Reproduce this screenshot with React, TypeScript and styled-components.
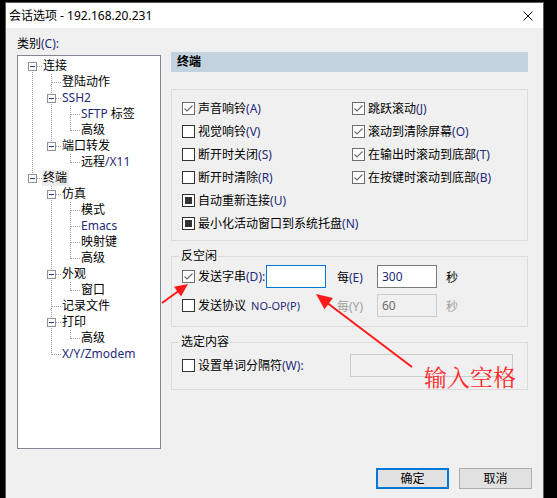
import React from 'react';
import styled, { createGlobalStyle } from 'styled-components';

const GlobalStyle = createGlobalStyle`
  html, body {
    margin: 0;
    padding: 0;
    background: #000;
  }
  body {
    font-family: "Noto Sans", "Noto Sans CJK SC", sans-serif;
    font-size: 12px;
    color: #000;
  }
`;

type TreeNode = {
  label: React.ReactNode;
  children?: TreeNode[];
  selected?: boolean;
};

type BoxState = 'checked' | 'unchecked' | 'mixed';

const Frame = styled.div`
  position: relative;
  width: 557px;
  height: 498px;
  box-sizing: border-box;
  padding: 2px 13px 0 5px;
  background: #000;
  overflow: hidden;
`;

const Window = styled.div`
  height: 100%;
  box-sizing: border-box;
  display: flex;
  flex-direction: column;
  border: 1px solid #5c5c5c;
  border-bottom: 0;
  background: #f0f0f0;
`;

const TitleBar = styled.div`
  height: 25px;
  display: flex;
  align-items: center;
  background: #fff;
  padding-left: 3px;
`;

const Title = styled.div`
  flex: 1;
  line-height: 16px;
  white-space: nowrap;
`;

const CloseBtn = styled.div`
  width: 30px;
  height: 25px;
  display: flex;
  align-items: center;
  justify-content: center;
`;

const Main = styled.div`
  display: grid;
  grid-template-columns: 144px 357px;
  column-gap: 10px;
  padding: 8px 15px 0 11px;
  align-items: start;
`;

const CategoryLabel = styled.div`
  line-height: 16px;
  margin-bottom: 3px;
`;

const TreeBox = styled.div`
  height: 394px;
  box-sizing: border-box;
  background: #fff;
  border: 1px solid #828790;
  padding-top: 2px;
`;

const TreeRow = styled.div`
  display: flex;
  height: 16px;
  padding-left: 5px;
`;

const TreeText = styled.span<{ $selected?: boolean }>`
  line-height: 16px;
  padding: 0 2px 0 1px;
  white-space: nowrap;
  background: ${p => (p.$selected ? '#ececec' : 'transparent')};
`;

const Lat = styled.span<{ $dim?: boolean }>`
  color: ${p => (p.$dim ? 'inherit' : '#1f2a7a')};
`;

const RightCol = styled.div`
  padding-top: 16px;
  display: flex;
  flex-direction: column;
`;

const SectionHeader = styled.div`
  height: 20px;
  line-height: 20px;
  background: #c3d2df;
  font-weight: bold;
  padding-left: 6px;
`;

const OptionGrid = styled.div`
  margin-top: 17px;
  border: 1px solid #dcdcdc;
  padding: 7px 10px 5px;
  display: grid;
  grid-template-rows: repeat(6, 23px);
  grid-template-columns: 170px 1fr;
  grid-auto-flow: column;
  align-items: center;
`;

const Group = styled.fieldset`
  margin: 7px 0 0;
  border: 1px solid #dcdcdc;
  padding: 1px 10px 9px;
  min-width: 0;
`;

const SelectGroup = styled(Group)`
  padding: 4px 10px 12px;
`;

const Legend = styled.legend`
  padding: 0 1px;
  margin-left: -2px;
  line-height: 16px;
`;

const IdleGrid = styled.div`
  display: grid;
  grid-template-columns: 84px 60px 51px 60px 1fr;
  grid-template-rows: 23px 23px;
  row-gap: 6px;
  align-items: center;
`;

const SelGrid = styled.div`
  display: grid;
  grid-template-columns: 168px 163px;
  height: 23px;
  align-items: center;
`;

const Check = styled.label<{ $span?: number }>`
  display: flex;
  align-items: center;
  gap: 3px;
  white-space: nowrap;
  line-height: 16px;
  grid-column: span ${p => p.$span ?? 1};
`;

const Box = styled.span<{ $state: BoxState }>`
  width: 13px;
  height: 13px;
  box-sizing: border-box;
  flex-shrink: 0;
  display: flex;
  align-items: center;
  justify-content: center;
  background: #fff;
  border: 1px solid ${p => (p.$state === 'checked' ? '#6d6d6d' : '#333')};
`;

const MixedMark = styled.span`
  width: 7px;
  height: 7px;
  background: #333;
`;

const Small = styled.span`
  font-size: 11px;
  margin-left: 5px;
`;

const Field = styled.div<{ $tone: 'focus' | 'normal' | 'disabled'; $width: number }>`
  width: ${p => p.$width}px;
  height: 23px;
  box-sizing: border-box;
  padding-left: 4px;
  line-height: 21px;
  border: 1px solid
    ${p => (p.$tone === 'focus' ? '#0078d7' : p.$tone === 'normal' ? '#7a7a7a' : '#cccccc')};
  background: ${p => (p.$tone === 'disabled' ? '#f0f0f0' : '#fff')};
  color: ${p => (p.$tone === 'disabled' ? '#6d6d6d' : '#000')};
`;

const Caption = styled.span<{ $disabled?: boolean; $pad?: number }>`
  padding-left: ${p => p.$pad ?? 0}px;
  white-space: nowrap;
  color: ${p => (p.$disabled ? '#a0a0a0' : '#000')};
`;

const Footer = styled.div`
  display: flex;
  justify-content: flex-end;
  gap: 10px;
  padding: 19px 11px 0 0;
`;

const Button = styled.div<{ $primary?: boolean }>`
  width: 73px;
  height: 21px;
  box-sizing: border-box;
  display: flex;
  align-items: center;
  justify-content: center;
  line-height: 16px;
  background: #e1e1e1;
  border: ${p => (p.$primary ? '2px solid #0078d7' : '1px solid #adadad')};
`;

const Overlay = styled.svg`
  position: absolute;
  left: 0;
  top: 0;
  pointer-events: none;
`;

const Note = styled.div`
  position: absolute;
  left: 424px;
  top: 365px;
  font-family: "Noto Serif CJK SC", "Noto Sans CJK SC", serif;
  font-size: 23px;
  line-height: 23px;
  color: #ff2a2a;
  white-space: nowrap;
`;

const tree: TreeNode[] = [
  {
    label: '连接',
    children: [
      { label: '登陆动作' },
      {
        label: <Lat>SSH2</Lat>,
        children: [{ label: <><Lat>SFTP</Lat> 标签</> }, { label: '高级' }],
      },
      { label: '端口转发', children: [{ label: <>远程<Lat>/X11</Lat></> }] },
    ],
  },
  {
    label: '终端',
    selected: true,
    children: [
      {
        label: '仿真',
        children: [
          { label: '模式' },
          { label: <Lat>Emacs</Lat> },
          { label: '映射键' },
          { label: '高级' },
        ],
      },
      { label: '外观', children: [{ label: '窗口' }] },
      { label: '记录文件' },
      { label: '打印', children: [{ label: '高级' }] },
      { label: <Lat>X/Y/Zmodem</Lat> },
    ],
  },
];

const dots = { stroke: '#a0a0a0', strokeDasharray: '1 1' };

const Guide = ({ on }: { on: boolean }) => (
  <svg width="19" height="16" viewBox="0 0 19 16">
    {on && <line x1="9.5" y1="0" x2="9.5" y2="16" {...dots} />}
  </svg>
);

const Connector = ({ first, last, open }: { first: boolean; last: boolean; open: boolean }) => (
  <svg width="19" height="16" viewBox="0 0 19 16">
    <line x1="9.5" y1={first ? 8 : 0} x2="9.5" y2={last ? 9 : 16} {...dots} />
    <line x1="10" y1="8.5" x2="19" y2="8.5" {...dots} />
    {open && (
      <>
        <rect x="5.5" y="4.5" width="8" height="8" fill="#fff" stroke="#919191" />
        <line x1="7" y1="8.5" x2="12" y2="8.5" stroke="#1f3f8f" />
      </>
    )}
  </svg>
);

function renderTree(nodes: TreeNode[], guides: boolean[], out: React.ReactNode[]) {
  nodes.forEach((node, i) => {
    const last = i === nodes.length - 1;
    out.push(
      <TreeRow key={out.length}>
        {guides.map((g, k) => (
          <Guide key={k} on={g} />
        ))}
        <Connector first={guides.length === 0 && i === 0} last={last} open={!!node.children} />
        <TreeText $selected={node.selected}>{node.label}</TreeText>
      </TreeRow>
    );
    if (node.children) renderTree(node.children, [...guides, !last], out);
  });
  return out;
}

const CheckBox = ({ state }: { state: BoxState }) => (
  <Box $state={state}>
    {state === 'checked' && (
      <svg width="11" height="11" viewBox="0 0 11 11">
        <polyline points="1.5,5.5 4,8 9.5,2.5" fill="none" stroke="#6a6a6a" strokeWidth="1.1" />
      </svg>
    )}
    {state === 'mixed' && <MixedMark />}
  </Box>
);

const Option = ({ state, text, keyHint }: { state: BoxState; text: string; keyHint: string }) => (
  <Check>
    <CheckBox state={state} />
    <span>
      {text}
      <Lat>({keyHint})</Lat>
    </span>
  </Check>
);

export default function App() {
  return (
    <>
      <GlobalStyle />
      <Frame>
        <Window>
          <TitleBar>
            <Title>会话选项 - 192.168.20.231</Title>
            <CloseBtn>
              <svg width="10" height="10" viewBox="0 0 10 10">
                <path d="M0.5 0.5 L9.5 9.5 M9.5 0.5 L0.5 9.5" stroke="#111" strokeWidth="1" />
              </svg>
            </CloseBtn>
          </TitleBar>

          <Main>
            <div>
              <CategoryLabel>
                类别<Lat>(C):</Lat>
              </CategoryLabel>
              <TreeBox>{renderTree(tree, [], [])}</TreeBox>
            </div>

            <RightCol>
              <SectionHeader>终端</SectionHeader>

              <OptionGrid>
                <Option state="checked" text="声音响铃" keyHint="A" />
                <Option state="unchecked" text="视觉响铃" keyHint="V" />
                <Option state="unchecked" text="断开时关闭" keyHint="S" />
                <Option state="unchecked" text="断开时清除" keyHint="R" />
                <Option state="mixed" text="自动重新连接" keyHint="U" />
                <Option state="mixed" text="最小化活动窗口到系统托盘" keyHint="N" />
                <Option state="checked" text="跳跃滚动" keyHint="J" />
                <Option state="checked" text="滚动到清除屏幕" keyHint="O" />
                <Option state="checked" text="在输出时滚动到底部" keyHint="T" />
                <Option state="checked" text="在按键时滚动到底部" keyHint="B" />
              </OptionGrid>

              <Group>
                <Legend>反空闲</Legend>
                <IdleGrid>
                  <Check>
                    <CheckBox state="checked" />
                    <span>
                      发送字串<Lat>(D):</Lat>
                    </span>
                  </Check>
                  <Field $tone="focus" $width={60} />
                  <Caption $pad={11}>
                    每<Lat>(E)</Lat>
                  </Caption>
                  <Field $tone="normal" $width={60}>
                    <Lat>300</Lat>
                  </Field>
                  <Caption $pad={9}>秒</Caption>

                  <Check $span={2}>
                    <CheckBox state="unchecked" />
                    <span>
                      发送协议
                      <Small>
                        <Lat>NO-OP(P)</Lat>
                      </Small>
                    </span>
                  </Check>
                  <Caption $pad={11} $disabled>
                    每(Y)
                  </Caption>
                  <Field $tone="disabled" $width={60}>
                    60
                  </Field>
                  <Caption $pad={9} $disabled>
                    秒
                  </Caption>
                </IdleGrid>
              </Group>

              <SelectGroup>
                <Legend>选定内容</Legend>
                <SelGrid>
                  <Check>
                    <CheckBox state="unchecked" />
                    <span>
                      设置单词分隔符<Lat>(W):</Lat>
                    </span>
                  </Check>
                  <Field $tone="disabled" $width={163} />
                </SelGrid>
              </SelectGroup>
            </RightCol>
          </Main>

          <Footer>
            <Button $primary>确定</Button>
            <Button>取消</Button>
          </Footer>
        </Window>

        <Overlay width="557" height="498" viewBox="0 0 557 498">
          <line x1="162" y1="303" x2="180" y2="290" stroke="#ff1a1a" strokeWidth="2" />
          <polygon points="188,284 174,286.8 181,296.5" fill="#ff1a1a" />
          <line x1="412" y1="367" x2="326" y2="302" stroke="#ff1a1a" strokeWidth="2" />
          <polygon points="316,294 332.9,298.1 324.5,309.3" fill="#ff1a1a" />
        </Overlay>
        <Note>输入空格</Note>
      </Frame>
    </>
  );
}
